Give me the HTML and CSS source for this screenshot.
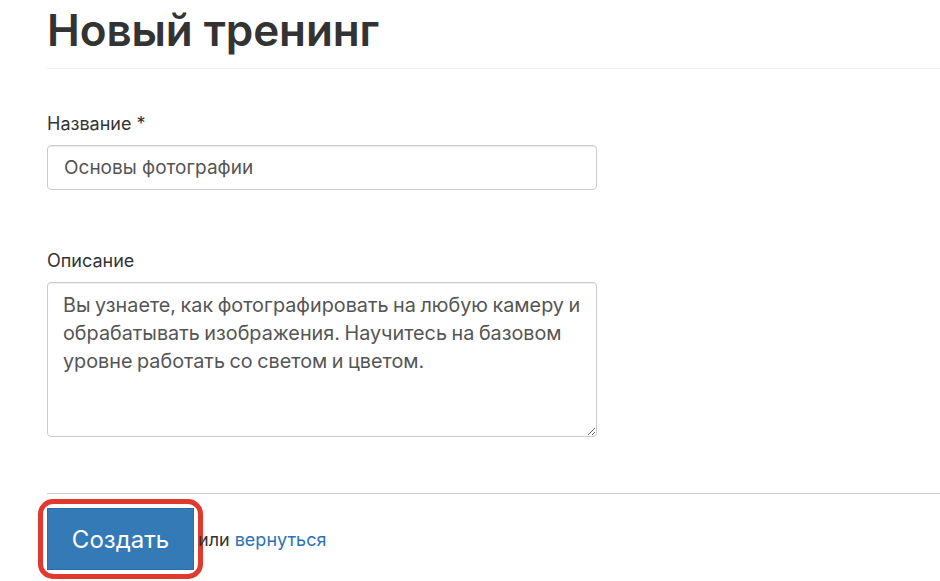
FILE: index.html
```html
<!DOCTYPE html>
<html lang="ru">
<head>
<meta charset="utf-8">
<title>Новый тренинг</title>
<link rel="stylesheet" href="styles.css">
</head>
<body>
<div class="page">
  <h1 class="title">Новый тренинг</h1>
  <hr class="rule rule-top">
  <form class="form">
    <div class="field field-name">
      <label class="label" for="name">Название *</label>
      <input class="control" id="name" type="text" value="Основы фотографии">
    </div>
    <div class="field field-desc">
      <label class="label" for="desc">Описание</label>
      <textarea class="control area" id="desc">Вы узнаете, как фотографировать на любую камеру и обрабатывать изображения. Научитесь на базовом уровне работать со светом и цветом.</textarea>
    </div>
    <hr class="rule rule-bottom">
    <div class="actions">
      <span class="highlight"><button class="btn" type="button">Создать</button></span>
      <span class="alt">или <a class="link" href="#">вернуться</a></span>
    </div>
  </form>
</div>
</body>
</html>
```
FILE: styles.css
```css
html, body {
  margin: 0;
  padding: 0;
  background: #fff;
}
body {
  font-family: Inter, "Noto Sans", "DejaVu Sans", sans-serif;
  color: #333;
}
.page {
  padding-left: 47px;
  padding-bottom: 20px;
}
.title {
  margin: 4px 0 0;
  font-size: 44px;
  line-height: 52px;
  font-weight: 600;
  color: #333;
  letter-spacing: -0.1px;
}
.rule {
  border: 0;
  height: 1px;
  margin: 0;
}
.rule-top {
  margin-top: 12px;
  background: #eee;
}
.form {
  display: flex;
  flex-direction: column;
}
.field {
  display: flex;
  flex-direction: column;
  width: 550px;
}
.field-name {
  margin-top: 42px;
}
.field-desc {
  margin-top: 58px;
}
.label {
  font-size: 18px;
  line-height: 25px;
  margin-bottom: 9px;
  color: #333;
}
.control {
  box-sizing: border-box;
  width: 550px;
  height: 45px;
  border: 1px solid #ccc;
  border-radius: 4px;
  padding: 0 16px;
  font-family: inherit;
  font-size: 19px;
  color: #555;
  background: #fff;
  box-shadow: inset 0 1px 1px rgba(0,0,0,0.075);
  margin: 0;
}
.area {
  height: 155px;
  padding: 8px 15px;
  font-size: 19.8px;
  line-height: 28px;
  word-spacing: -1px;
  resize: both;
}
.rule-bottom {
  margin-top: 56px;
  background: #ccc;
}
.actions {
  display: flex;
  align-items: center;
  margin-top: 14px;
}
.highlight {
  display: inline-flex;
  border-radius: 6px;
  outline: 5px solid #e2392f;
  outline-offset: 4px;
}
.btn {
  box-sizing: border-box;
  width: 147px;
  height: 62px;
  background: #337ab7;
  border: 1px solid #2e6da4;
  border-radius: 0;
  color: #fff;
  font-family: inherit;
  font-size: 24px;
  padding: 0;
}
.alt {
  margin-left: 4px;
  font-size: 18px;
  color: #333;
}
.link {
  color: #2a73b5;
  text-decoration: none;
}
```
